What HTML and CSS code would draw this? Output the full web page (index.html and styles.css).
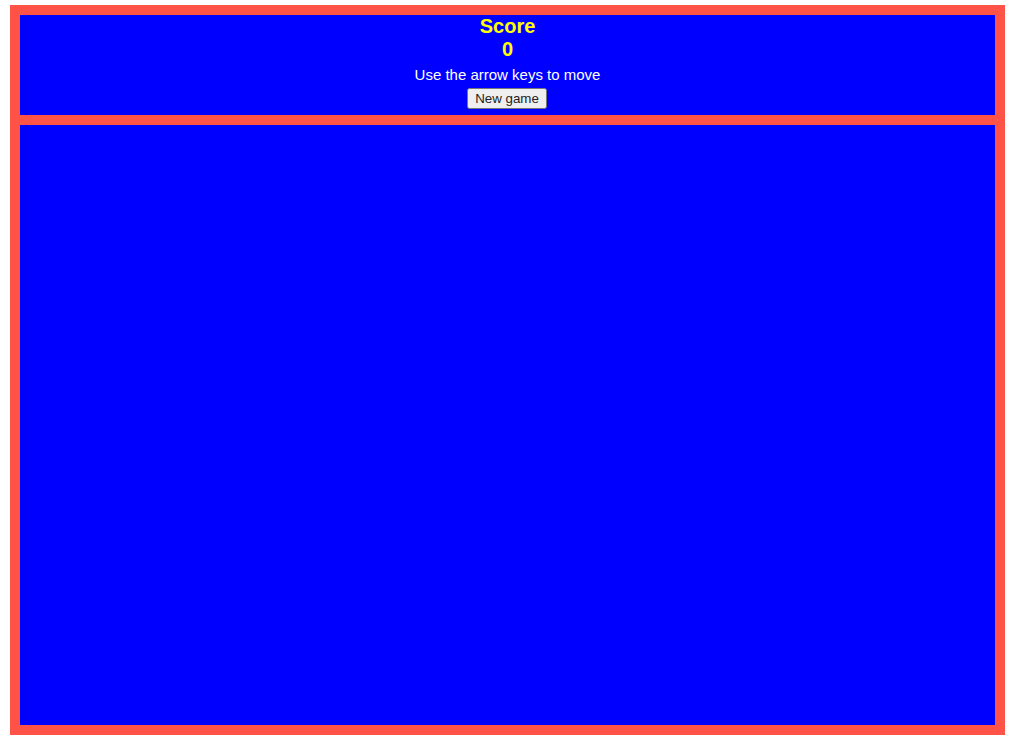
FILE: index.html
```html
<!DOCTYPE html>
<html>
<head>
<meta charset="utf-8">
<link rel="stylesheet" href="styles.css">
</head>
<body>
<div class="frame">
  <header class="panel">
    <div class="score-label">Score</div>
    <div class="score-value">0</div>
    <div class="hint">Use the arrow keys to move</div>
    <button class="new-game">New game</button>
  </header>
  <main class="board"></main>
</div>
</body>
</html>
```
FILE: styles.css
```css
html, body {
  margin: 0;
  padding: 0;
  background: #ffffff;
}
body {
  padding: 5px 10px;
  font-family: "Liberation Sans", Arial, sans-serif;
}
.frame {
  width: 995px;
  box-sizing: border-box;
  background: #ff5347;
  padding: 10px;
  display: flex;
  flex-direction: column;
  gap: 10px;
}
.panel {
  height: 100px;
  background: #0000ff;
  display: flex;
  flex-direction: column;
  align-items: center;
}
.score-label, .score-value {
  color: #ffff00;
  font-weight: bold;
  font-size: 20px;
  line-height: 23px;
}
.hint {
  color: #ffffff;
  font-size: 15px;
  line-height: 18px;
  margin-top: 5px;
}
.new-game {
  margin-top: 4px;
  font-family: "Liberation Sans", Arial, sans-serif;
  font-size: 13.333px;
  color: #222222;
  height: 21px;
  width: 80px;
  padding: 1px 0;
  margin-left: -1px;
}
.board {
  height: 600px;
  background: #0000ff;
}
```
